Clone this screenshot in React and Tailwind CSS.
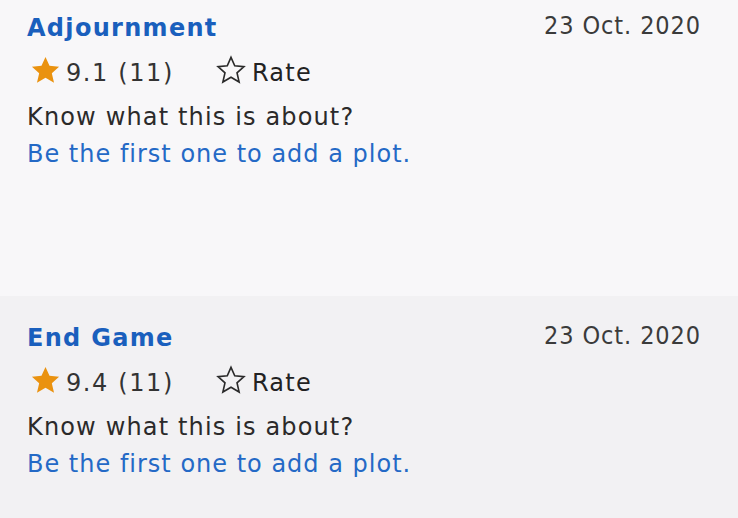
const titles = [
  { title: "Adjournment", rating: "9.1", votes: "11", date: "23 Oct. 2020" },
  { title: "End Game", rating: "9.4", votes: "11", date: "23 Oct. 2020" },
]

const StarFilled = () => (
  <svg width="31" height="31" viewBox="0 0 24 24" className="shrink-0 -mt-[6px]">
    <path d="M12 1.5l3.1 6.9 7.4.7-5.6 5 1.7 7.4L12 17.6l-6.6 3.9 1.7-7.4-5.6-5 7.4-.7z" fill="#ea920f" />
  </svg>
)

const StarOutline = () => (
  <svg width="32" height="32" viewBox="0 0 24 24" className="shrink-0 -mt-[6px]">
    <path d="M12 2.5l2.8 6.4 6.9.6-5.2 4.6 1.6 6.9L12 17.4l-6.1 3.6 1.6-6.9-5.2-4.6 6.9-.6z" fill="none" stroke="#2a2a2a" strokeWidth="1.2" strokeLinejoin="miter" />
  </svg>
)

const TitleItem = ({ item, bg }) => {
  return (
    <div className={`h-[310px] shrink-0 pt-[26px] pl-[27px] pr-[37px] ${bg}`}>
      <div className="flex justify-between items-start">
        <a className="text-[24px] leading-[32px] font-bold tracking-[1.3px] text-[#1a5fbd]">{item.title}</a>
        <span className="-mt-[2px] text-[25px] leading-[32px] tracking-[0.9px] text-[#3b3b3b] font-['DejaVu_Sans_Condensed','Liberation_Sans',sans-serif]">{item.date}</span>
      </div>
      <div className="mt-[13px] flex items-center h-[32px] text-[24px] leading-[32px]">
        <div className="flex items-center pl-[3px]">
          <StarFilled />
          <span className="ml-[5px] tracking-[1.6px] text-[#333]">
            {item.rating} ({item.votes})
          </span>
        </div>
        <div className="ml-[41px] flex items-center">
          <StarOutline />
          <span className="ml-[5px] tracking-[1.3px] text-[#222]">Rate</span>
        </div>
      </div>
      <div className="mt-3 text-[24px] leading-[32px] tracking-[1.15px] text-[#2b2a2a]">Know what this is about?</div>
      <div className="mt-[5px] text-[24px] leading-[32px] tracking-[1px] text-[#2469c6]">
        Be the first one to add a plot.
      </div>
    </div>
  )
}

export default function App() {
  return (
    <div className="w-[738px] h-[518px] overflow-hidden font-['DejaVu_Sans',sans-serif]">
      <div className="-mt-[14px] flex flex-col">
        <TitleItem item={titles[0]} bg="bg-[#f8f7f9]" />
        <TitleItem item={titles[1]} bg="bg-[#f2f1f3]" />
      </div>
    </div>
  )
}
